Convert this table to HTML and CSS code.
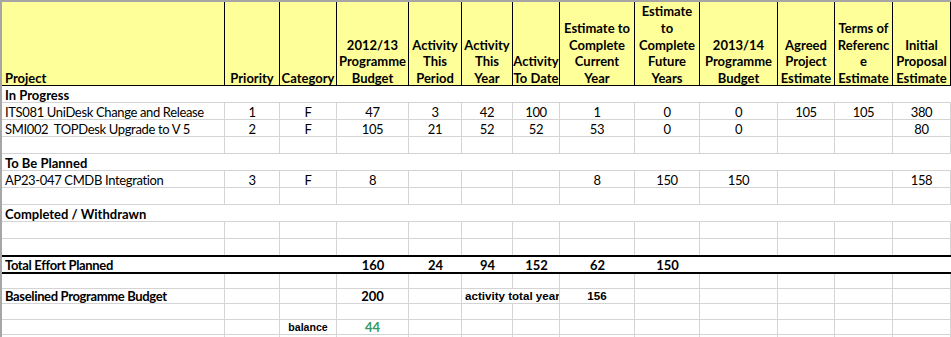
FILE: index.html
```html
<!DOCTYPE html>
<html>
<head>
<meta charset="utf-8">
<link rel="stylesheet" href="styles.css">
</head>
<body>
<div class="sheet">
  <div class="row head">
    <div class="c w1 left"><span class="h">Project</span></div>
    <div class="c w2"><span class="h">Priority</span></div>
    <div class="c w3"><span class="h">Category</span></div>
    <div class="c w4"><span class="h">2012/13<br>Programme<br>Budget</span></div>
    <div class="c w5"><span class="h">Activity<br>This<br>Period</span></div>
    <div class="c w6"><span class="h">Activity<br>This<br>Year</span></div>
    <div class="c w7"><span class="h">Activity<br>To Date</span></div>
    <div class="c w8"><span class="h">Estimate to<br>Complete<br>Current<br>Year</span></div>
    <div class="c w9"><span class="h">Estimate<br>to<br>Complete<br>Future<br>Years</span></div>
    <div class="c w10"><span class="h">2013/14<br>Programme<br>Budget</span></div>
    <div class="c w11"><span class="h">Agreed<br>Project<br>Estimate</span></div>
    <div class="c w12"><span class="h">Terms of<br>Referenc<br>e<br>Estimate</span></div>
    <div class="c w13"><span class="h">Initial<br>Proposal<br>Estimate</span></div>
  </div>

  <div class="row section"><div class="full">In Progress</div></div>

  <div class="row">
    <div class="c w1 left">ITS081 UniDesk Change and Release</div>
    <div class="c w2">1</div><div class="c w3">F</div><div class="c w4">47</div>
    <div class="c w5">3</div><div class="c w6">42</div><div class="c w7">100</div>
    <div class="c w8">1</div><div class="c w9">0</div><div class="c w10">0</div>
    <div class="c w11">105</div><div class="c w12">105</div><div class="c w13">380</div>
  </div>
  <div class="row">
    <div class="c w1 left">SMI002&nbsp; TOPDesk Upgrade to V 5</div>
    <div class="c w2">2</div><div class="c w3">F</div><div class="c w4">105</div>
    <div class="c w5">21</div><div class="c w6">52</div><div class="c w7">52</div>
    <div class="c w8">53</div><div class="c w9">0</div><div class="c w10">0</div>
    <div class="c w11"></div><div class="c w12"></div><div class="c w13">80</div>
  </div>
  <div class="row">
    <div class="c w1"></div><div class="c w2"></div><div class="c w3"></div><div class="c w4"></div>
    <div class="c w5"></div><div class="c w6"></div><div class="c w7"></div><div class="c w8"></div>
    <div class="c w9"></div><div class="c w10"></div><div class="c w11"></div><div class="c w12"></div><div class="c w13"></div>
  </div>

  <div class="row section"><div class="full">To Be Planned</div></div>

  <div class="row">
    <div class="c w1 left">AP23-047 CMDB Integration</div>
    <div class="c w2">3</div><div class="c w3">F</div><div class="c w4">8</div>
    <div class="c w5"></div><div class="c w6"></div><div class="c w7"></div>
    <div class="c w8">8</div><div class="c w9">150</div><div class="c w10">150</div>
    <div class="c w11"></div><div class="c w12"></div><div class="c w13">158</div>
  </div>
  <div class="row">
    <div class="c w1"></div><div class="c w2"></div><div class="c w3"></div><div class="c w4"></div>
    <div class="c w5"></div><div class="c w6"></div><div class="c w7"></div><div class="c w8"></div>
    <div class="c w9"></div><div class="c w10"></div><div class="c w11"></div><div class="c w12"></div><div class="c w13"></div>
  </div>

  <div class="row section"><div class="full">Completed / Withdrawn</div></div>

  <div class="row">
    <div class="c w1"></div><div class="c w2"></div><div class="c w3"></div><div class="c w4"></div>
    <div class="c w5"></div><div class="c w6"></div><div class="c w7"></div><div class="c w8"></div>
    <div class="c w9"></div><div class="c w10"></div><div class="c w11"></div><div class="c w12"></div><div class="c w13"></div>
  </div>
  <div class="row pre-total">
    <div class="c w1"></div><div class="c w2"></div><div class="c w3"></div><div class="c w4"></div>
    <div class="c w5"></div><div class="c w6"></div><div class="c w7"></div><div class="c w8"></div>
    <div class="c w9"></div><div class="c w10"></div><div class="c w11"></div><div class="c w12"></div><div class="c w13"></div>
  </div>

  <div class="row total">
    <div class="c w1 left tight">Total Effort Planned</div>
    <div class="c w2"></div><div class="c w3"></div><div class="c w4">160</div>
    <div class="c w5">24</div><div class="c w6">94</div><div class="c w7">152</div>
    <div class="c w8">62</div><div class="c w9">150</div><div class="c w10"></div>
    <div class="c w11"></div><div class="c w12"></div><div class="c w13"></div>
  </div>

  <div class="row short">
    <div class="c w1"></div><div class="c w2"></div><div class="c w3"></div><div class="c w4"></div>
    <div class="c w5"></div><div class="c w6"></div><div class="c w7"></div><div class="c w8"></div>
    <div class="c w9"></div><div class="c w10"></div><div class="c w11"></div><div class="c w12"></div><div class="c w13"></div>
  </div>
  <div class="row short">
    <div class="c w1 left bold tight">Baselined Programme Budget</div>
    <div class="c w2"></div><div class="c w3"></div><div class="c w4 bold">200</div>
    <div class="c w5"></div><div class="c w6 left arial wide overflow">activity total year</div><div class="c w7"></div>
    <div class="c w8 arial wide">156</div><div class="c w9"></div><div class="c w10"></div>
    <div class="c w11"></div><div class="c w12"></div><div class="c w13"></div>
  </div>
  <div class="row mid">
    <div class="c w1"></div><div class="c w2"></div><div class="c w3"></div><div class="c w4"></div>
    <div class="c w5"></div><div class="c w6"></div><div class="c w7"></div><div class="c w8"></div>
    <div class="c w9"></div><div class="c w10"></div><div class="c w11"></div><div class="c w12"></div><div class="c w13"></div>
  </div>
  <div class="row short">
    <div class="c w1"></div><div class="c w2"></div><div class="c w3 arial">balance</div><div class="c w4 bold green">44</div>
    <div class="c w5"></div><div class="c w6"></div><div class="c w7"></div><div class="c w8"></div>
    <div class="c w9"></div><div class="c w10"></div><div class="c w11"></div><div class="c w12"></div><div class="c w13"></div>
  </div>
  <div class="row short">
    <div class="c w1"></div><div class="c w2"></div><div class="c w3"></div><div class="c w4"></div>
    <div class="c w5"></div><div class="c w6"></div><div class="c w7"></div><div class="c w8"></div>
    <div class="c w9"></div><div class="c w10"></div><div class="c w11"></div><div class="c w12"></div><div class="c w13"></div>
  </div>
</div>
</body>
</html>
```

FILE: styles.css
```css
html, body {
  margin: 0;
  padding: 0;
  background: #ffffff;
}

.sheet {
  width: 951px;
  height: 337px;
  box-sizing: border-box;
  border-left: 2px solid #a6a6a6;
  border-top: 2px solid #a6a6a6;
  font-family: Lato, "Liberation Sans", sans-serif;
  font-size: 13px;
  color: #000;
  overflow: hidden;
}

.row {
  display: flex;
  height: 17px;
}

.c {
  box-sizing: border-box;
  flex: none;
  border-right: 1px solid #d4d4d4;
  border-bottom: 1px solid #d4d4d4;
  text-align: center;
  line-height: 16px;
  padding-top: 1px;
  white-space: nowrap;
  letter-spacing: -0.35px;
}

.w1 { width: 223px; }
.w2 { width: 55px; }
.w3 { width: 57px; }
.w4 { width: 72px; }
.w5 { width: 53px; }
.w6 { width: 51px; }
.w7 { width: 47px; }
.w8 { width: 75px; }
.w9 { width: 65px; }
.w10 { width: 78px; }
.w11 { width: 57px; }
.w12 { width: 58px; }
.w13 { width: 58px; }

.left {
  text-align: left;
  padding-left: 3px;
}

.head {
  height: 84px;
}

.head .c {
  background: #ffff99;
  border-right-color: #000;
  border-bottom-color: #000;
  font-weight: bold;
  letter-spacing: 0;
  line-height: 16.8px;
  padding-top: 0;
  display: flex;
  flex-direction: column;
  justify-content: flex-end;
}

.head .h {
  display: block;
  margin-bottom: -2px;
}

.section .full {
  width: 949px;
  box-sizing: border-box;
  border-bottom: 1px solid #d4d4d4;
  padding-left: 3px;
  padding-top: 1px;
  font-weight: bold;
  line-height: 16px;
}

.pre-total {
  height: 16px;
}

.pre-total .c {
  border-bottom: none;
}

.total {
  width: 949px;
  height: 19px;
  box-sizing: border-box;
  border-top: 2px solid #000;
  border-bottom: 2px solid #000;
}

.total .c {
  border: none;
  font-weight: bold;
  letter-spacing: 0;
  line-height: 15px;
  padding-top: 1px;
}

.short {
  height: 15px;
}

.short .c {
  line-height: 14px;
  padding-top: 0;
}

.mid {
  height: 16px;
}

.bold {
  font-weight: bold;
  letter-spacing: 0;
}

.total .tight,
.tight {
  letter-spacing: -0.35px;
}

.arial {
  font-family: "Liberation Sans", Arial, sans-serif;
  font-size: 10.6px;
  font-weight: bold;
  letter-spacing: 0;
}

.wide {
  font-size: 11.6px;
}

.overflow {
  overflow: visible;
  border-right: none;
}

.green {
  color: #339966;
}
```
